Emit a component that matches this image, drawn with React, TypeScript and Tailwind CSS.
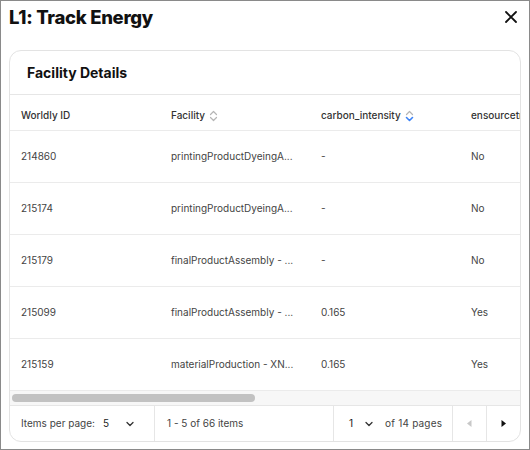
import React from "react";

const rows = [
  { id: "214860", facility: "printingProductDyeingA...", ci: "-", en: "No" },
  { id: "215174", facility: "printingProductDyeingA...", ci: "-", en: "No" },
  { id: "215179", facility: "finalProductAssembly - ...", ci: "-", en: "No" },
  { id: "215099", facility: "finalProductAssembly - ...", ci: "0.165", en: "Yes" },
  { id: "215159", facility: "materialProduction - XN...", ci: "0.165", en: "Yes" },
];

function SortIcon({ active }: { active?: boolean }) {
  return (
    <svg width="9" height="12" viewBox="0 0 9 12" className="ml-[4px]">
      <path d="M1.5 4.5 L4.5 1.5 L7.5 4.5" fill="none" stroke="#b5b5b5" strokeWidth="1.2" strokeLinecap="round" strokeLinejoin="round" />
      <path d="M1.5 7.5 L4.5 10.5 L7.5 7.5" fill="none" stroke={active ? "#3b82f6" : "#b5b5b5"} strokeWidth={active ? 1.6 : 1.2} strokeLinecap="round" strokeLinejoin="round" />
    </svg>
  );
}

function SmallChevron() {
  return (
    <svg width="8" height="6" viewBox="0 0 8 6">
      <path d="M1 1.5 L4 4.5 L7 1.5" fill="none" stroke="#333" strokeWidth="1.3" strokeLinecap="round" strokeLinejoin="round" />
    </svg>
  );
}

export default function App() {
  return (
    <div className="w-[530px] h-[450px] border border-[#8a8a8a] bg-white flex flex-col px-2 font-['Inter',sans-serif] text-[#3a3a3a]">
      <div className="flex items-center justify-between pt-[2px] h-[30px]">
        <h1 className="text-[18.5px] leading-[28px] font-extrabold text-[#111] tracking-[-0.3px]">L1: Track Energy</h1>
        <svg width="12" height="12" viewBox="0 0 12 12" className="mr-[4px]">
          <path d="M1 1 L11 11 M11 1 L1 11" stroke="#111" strokeWidth="1.8" strokeLinecap="round" />
        </svg>
      </div>
      <div className="mt-[19px] border border-[#e3e3e3] rounded-xl overflow-hidden flex flex-col">
        <div className="h-[44px] flex items-center pl-[17px] pb-[1px] border-b border-[#e6e6e6]">
          <span className="text-[14px] font-bold text-[#111]">Facility Details</span>
        </div>
        <div className="overflow-hidden">
          <div className="flex h-[36px] items-center border-b border-[#ebebeb] pl-[11px] pt-[6px] text-[10px] text-[#333] font-medium whitespace-nowrap">
            <div className="w-[150px] shrink-0">Worldly ID</div>
            <div className="w-[150px] shrink-0 flex items-center">Facility<SortIcon /></div>
            <div className="w-[150px] shrink-0 flex items-center">carbon_intensity<SortIcon active /></div>
            <div className="w-[150px] shrink-0">ensourcetracker</div>
          </div>
          {rows.map((r) => (
            <div key={r.id} className="flex h-[52px] items-center border-b border-[#ebebeb] pl-[11px] text-[10px] text-[#444] whitespace-nowrap">
              <div className="w-[150px] shrink-0">{r.id}</div>
              <div className="w-[150px] shrink-0">{r.facility}</div>
              <div className="w-[150px] shrink-0">{r.ci}</div>
              <div className="w-[150px] shrink-0">{r.en}</div>
            </div>
          ))}
        </div>
        <div className="h-[15px] bg-[#f7f7f7] border-b border-[#e6e6e6] flex items-center pl-[2px]">
          <div className="w-[243px] h-[8px] rounded-full bg-[#c2c2c2]" />
        </div>
        <div className="h-[35px] flex items-stretch text-[10px] text-[#444]">
          <div className="w-[145px] flex items-center pl-[11px] border-r border-[#e6e6e6]">
            <span>Items per page:</span>
            <span className="ml-[8px] text-[#222]">5</span>
            <span className="ml-[17px]"><SmallChevron /></span>
          </div>
          <div className="flex-1 flex items-center pl-[12px]">1 - 5 of 66 items</div>
          <div className="w-[119px] flex items-center border-l border-[#e6e6e6] pl-[15px]">
            <span className="text-[#222]">1</span>
            <span className="ml-[12px]"><SmallChevron /></span>
            <span className="ml-[12px] tracking-[0.2px]">of 14 pages</span>
          </div>
          <div className="w-[34px] flex items-center justify-center border-l border-[#e6e6e6]">
            <svg width="5" height="7" viewBox="0 0 5 7"><path d="M4.5 0 L0 3.5 L4.5 7 Z" fill="#c8c8c8" /></svg>
          </div>
          <div className="w-[34px] flex items-center justify-center border-l border-[#e6e6e6]">
            <svg width="5" height="7" viewBox="0 0 5 7"><path d="M0.5 0 L5 3.5 L0.5 7 Z" fill="#111" /></svg>
          </div>
        </div>
      </div>
    </div>
  );
}
